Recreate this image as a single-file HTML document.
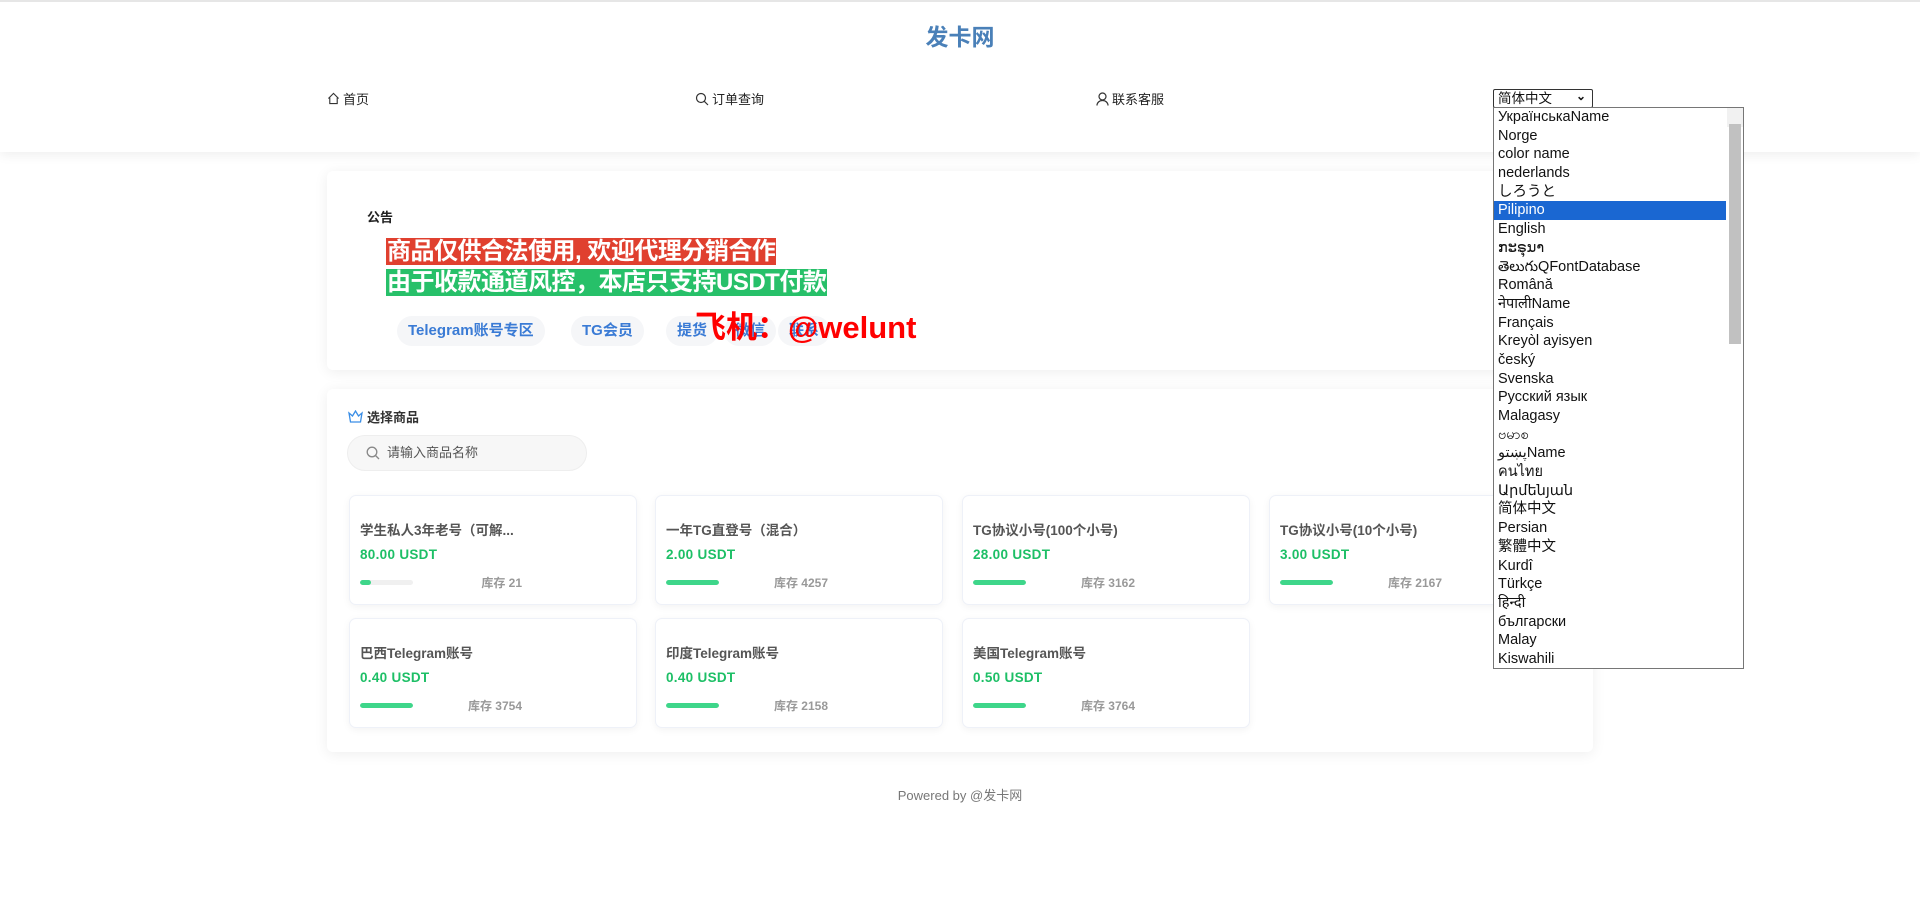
<!DOCTYPE html>
<html><head><meta charset="utf-8"><style>
*{box-sizing:border-box;margin:0;padding:0}
body{width:1920px;height:911px;overflow:hidden;background:#fff;font-family:"Liberation Sans","Noto Sans CJK SC",sans-serif;position:relative;color:#333}
.abs{position:absolute}
.hdr{position:absolute;left:0;top:0;width:1920px;height:152px;background:#fff;border-top:2px solid #e6e6e6;box-shadow:0 4px 10px rgba(0,0,0,.06)}
.title{position:absolute;left:0;width:1920px;top:16px;text-align:center;font-size:23px;font-weight:bold;color:#4a80b8}
.nav{position:absolute;top:87px;font-size:13px;color:#222;display:flex;align-items:center;gap:3px}
.card{position:absolute;background:#fff;border-radius:6px;box-shadow:0 2px 14px rgba(0,0,0,.07)}
.hl{position:absolute;color:#fff;font-weight:bold;font-size:24px;line-height:27px;padding:0 1px;letter-spacing:-0.5px}
.tag{position:absolute;top:145px;height:30px;line-height:30px;border-radius:15px;background:#f5f6f8;color:#3a7bd5;font-size:15px;font-weight:bold;padding:0 11px}
.pc{position:absolute;width:288px;height:110px;background:#fff;border-radius:7px;border:1px solid #eef1f8;box-shadow:0 2px 8px rgba(0,0,0,.05)}
.pc .t{position:absolute;left:10px;top:23px;font-size:13.5px;font-weight:bold;color:#555}
.pc .p{position:absolute;left:10px;top:51px;font-size:13.5px;font-weight:bold;color:#1dbf66;letter-spacing:.3px}
.pc .bar{position:absolute;left:10px;top:84px;width:53px;height:5px;border-radius:3px;background:#f0f0f0;overflow:hidden}
.pc .bar i{display:block;height:5px;background:#3ed68a;border-radius:3px}
.pc .s{position:absolute;right:114px;top:78px;font-size:12px;font-weight:bold;color:#999}
.dd{position:absolute;left:1493px;top:107px;width:251px;height:562px;background:#fff;border:1px solid #767676;font-size:14.5px;color:#111;overflow:hidden}
.dd div{height:18.7px;line-height:18.7px;padding-left:4px;white-space:nowrap}
.dd .sel{background:#1a67d2;color:#fff;margin-right:17px}
.sb{position:absolute;right:0;top:0;width:16px;height:100%;background:#f1f1f1}
.sb .th{position:absolute;left:2px;top:16px;width:12px;height:220px;background:#c1c1c1}
</style></head><body>
<div class="hdr">
<div class="title">发卡网</div>
<div class="nav" style="left:327px"><svg width="13" height="13" viewBox="0 0 14 14" fill="none" stroke="#333" stroke-width="1.2"><path d="M1.5 7L7 1.5 12.5 7M3 6v6.5h8V6"/></svg>首页</div>
<div class="nav" style="left:695px"><svg width="14" height="14" viewBox="0 0 14 14" fill="none" stroke="#333" stroke-width="1.2"><circle cx="6" cy="6" r="4.5"/><path d="M9.3 9.3L13 13"/></svg>订单查询</div>
<div class="nav" style="left:1096px"><svg width="13" height="14" viewBox="0 0 13 14" fill="none" stroke="#333" stroke-width="1.2"><circle cx="6.5" cy="4.5" r="3.5"/><path d="M1 13.5c0-3 2.5-5 5.5-5s5.5 2 5.5 5"/></svg>联系客服</div>
<div class="abs" style="left:1493px;top:87px;width:100px;height:19px;border:1px solid #333;border-radius:2px;font-size:13.5px;line-height:17px;padding-left:4px;color:#111">简体中文<span style="position:absolute;right:6px;top:-2px;font-size:12px;font-weight:bold">&#8964;</span></div>
</div>

<div class="card" style="left:327px;top:171px;width:1266px;height:199px">
<div class="abs" style="left:40px;top:36px;font-size:13px;font-weight:bold;color:#222">公告</div>
<div class="hl" style="left:59px;top:67px;background:#e0402f">商品仅供合法使用, 欢迎代理分销合作</div>
<div class="hl" style="left:59px;top:98px;background:#27c069">由于收款通道风控，本店只支持USDT付款</div>
<div class="tag" style="left:70px">Telegram账号专区</div>
<div class="tag" style="left:244px">TG会员</div>
<div class="tag" style="left:339px">提货</div>
<div class="tag" style="left:397px">微信</div>
<div class="tag" style="left:451px">联系</div>
<div class="abs" style="left:368px;top:131px;font-size:31px;font-weight:bold;color:#f00">飞机：@welunt</div>
</div>

<div class="card" style="left:327px;top:389px;width:1266px;height:363px">
<div class="abs" style="left:21px;top:18px;font-size:13px;font-weight:bold;color:#333;display:flex;align-items:center;gap:4px"><svg width="15" height="14" viewBox="0 0 15 14" fill="none" stroke="#3a8ee6" stroke-width="1.3"><path d="M1 3l3.5 3L7.5 1l3 5L14 3l-1.5 9h-10z"/></svg>选择商品</div>
<div class="abs" style="left:20px;top:46px;width:240px;height:36px;border-radius:18px;background:#f7f7f7;border:1px solid #eee;font-size:13px;color:#555;padding-left:39px;line-height:34px"><svg class="abs" style="left:18px;top:10px" width="14" height="14" viewBox="0 0 14 14" fill="none" stroke="#888" stroke-width="1.3"><circle cx="6" cy="6" r="4.8"/><path d="M9.5 9.5L13 13"/></svg>请输入商品名称</div>
</div>

<div class="pc" style="left:349px;top:495px"><div class="t">学生私人3年老号（可解...</div><div class="p">80.00 USDT</div><div class="bar"><i style="width:11px"></i></div><div class="s">库存 21</div></div>
<div class="pc" style="left:655px;top:495px"><div class="t">一年TG直登号（混合）</div><div class="p">2.00 USDT</div><div class="bar"><i style="width:53px"></i></div><div class="s">库存 4257</div></div>
<div class="pc" style="left:962px;top:495px"><div class="t">TG协议小号(100个小号)</div><div class="p">28.00 USDT</div><div class="bar"><i style="width:53px"></i></div><div class="s">库存 3162</div></div>
<div class="pc" style="left:1269px;top:495px"><div class="t">TG协议小号(10个小号)</div><div class="p">3.00 USDT</div><div class="bar"><i style="width:53px"></i></div><div class="s">库存 2167</div></div>
<div class="pc" style="left:349px;top:618px"><div class="t">巴西Telegram账号</div><div class="p">0.40 USDT</div><div class="bar"><i style="width:53px"></i></div><div class="s">库存 3754</div></div>
<div class="pc" style="left:655px;top:618px"><div class="t">印度Telegram账号</div><div class="p">0.40 USDT</div><div class="bar"><i style="width:53px"></i></div><div class="s">库存 2158</div></div>
<div class="pc" style="left:962px;top:618px"><div class="t">美国Telegram账号</div><div class="p">0.50 USDT</div><div class="bar"><i style="width:53px"></i></div><div class="s">库存 3764</div></div>

<div class="abs" style="left:0;width:1920px;top:785px;text-align:center;font-size:13px;color:#777">Powered by @发卡网</div>

<div class="dd">
<div>УкраїнськаName</div><div>Norge</div><div>color name</div><div>nederlands</div><div>しろうと</div><div class="sel">Pilipino</div><div>English</div><div>ກະຣຸນາ</div><div>తెలుగుQFontDatabase</div><div>Română</div><div>नेपालीName</div><div>Français</div><div>Kreyòl ayisyen</div><div>český</div><div>Svenska</div><div>Русский язык</div><div>Malagasy</div><div>ဗမာစ</div><div>پښتوName</div><div>คนไทย</div><div>Արմենյան</div><div>简体中文</div><div>Persian</div><div>繁體中文</div><div>Kurdî</div><div>Türkçe</div><div>हिन्दी</div><div>български</div><div>Malay</div><div>Kiswahili</div>
<div class="sb"><div class="th"></div></div>
</div>
</body></html>
